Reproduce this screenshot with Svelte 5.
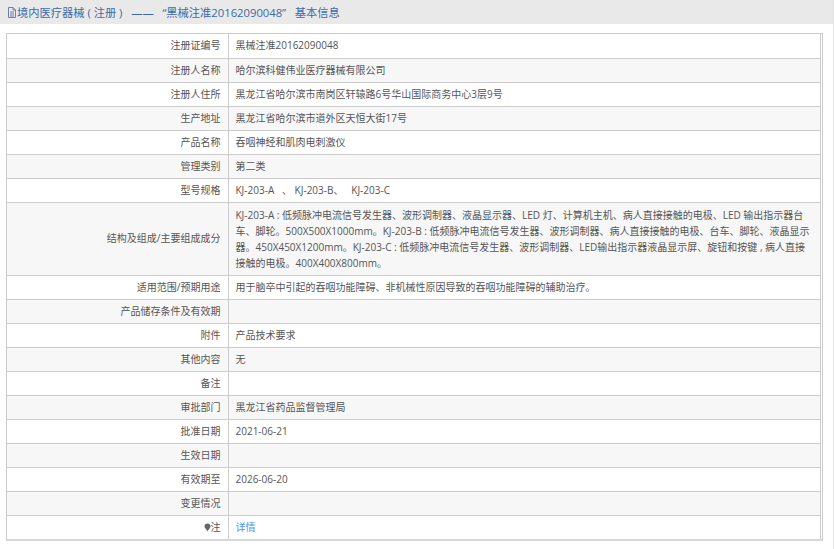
<script>
  const rows = [
    ['注册证编号', '黑械注准20162090048'],
    ['注册人名称', '哈尔滨科健伟业医疗器械有限公司'],
    ['注册人住所', '黑龙江省哈尔滨市南岗区轩辕路6号华山国际商务中心3层9号'],
    ['生产地址', '黑龙江省哈尔滨市道外区天恒大街17号'],
    ['产品名称', '吞咽神经和肌肉电刺激仪'],
    ['管理类别', '第二类'],
    ['型号规格', 'KJ-203-A   、 KJ-203-B、   KJ-203-C'],
    ['结构及组成/主要组成成分', 'KJ-203-A : 低频脉冲电流信号发生器、波形调制器、液晶显示器、LED 灯、计算机主机、病人直接接触的电极、LED 输出指示器台车、脚轮。500X500X1000mm。KJ-203-B : 低频脉冲电流信号发生器、波形调制器、病人直接接触的电极、台车、脚轮、液晶显示器。450X450X1200mm。KJ-203-C : 低频脉冲电流信号发生器、波形调制器、LED输出指示器液晶显示屏、旋钮和按键 , 病人直接接触的电极。400X400X800mm。'],
    ['适用范围/预期用途', '用于脑卒中引起的吞咽功能障碍、非机械性原因导致的吞咽功能障碍的辅助治疗。'],
    ['产品储存条件及有效期', ''],
    ['附件', '产品技术要求'],
    ['其他内容', '无'],
    ['备注', ''],
    ['审批部门', '黑龙江省药品监督管理局'],
    ['批准日期', '2021-06-21'],
    ['生效日期', ''],
    ['有效期至', '2026-06-20'],
    ['变更情况', ''],
  ];
</script>

<div class="page">
  <div class="head">
    <svg class="doc" viewBox="0 0 9 11" width="9" height="11">
      <path d="M1.5 .5H6L8.5 3V10.5H1.5Z M6 .5V3H8.5 M3 5H7 M3 7H7 M3 9H7" fill="none" stroke="#6f7fa8" stroke-width="1" />
    </svg>
    <span>境内医疗器械 ( 注册 )  &nbsp;——  &nbsp;“黑械注准20162090048”   基本信息</span>
  </div>
  <div class="frame">
    <table>
      <tbody>
        {#each rows as r}
          <tr>
            <th>{r[0]}</th>
            <td class:long={r[1].length > 100}>{r[1]}</td>
          </tr>
        {/each}
        <tr>
          <th>
            <svg class="pin" viewBox="0 0 8 10" width="7" height="9">
              <path d="M4 0.5A3.4 3.4 0 0 1 7.4 3.9C7.4 5.8 5 7 4 9.5C3 7 .6 5.8 .6 3.9A3.4 3.4 0 0 1 4 .5Z" fill="#666" />
            </svg>注
          </th>
          <td><span class="link">详情</span></td>
        </tr>
      </tbody>
    </table>
  </div>
</div>

<style>
  :global(body) {
    margin: 0;
    background: #fff;
    font-family: "Open Sans", "Noto Sans CJK SC", sans-serif;
  }

  .page {
    width: 834px;
    height: 549px;
    box-sizing: border-box;
    border-right: 1px solid #e6e6e6;
    overflow: hidden;
  }

  .head {
    display: flex;
    align-items: center;
    gap: 1px;
    height: 24px;
    padding-left: 7px;
    background: #e9e9e9;
    color: #3c6aa8;
    font-size: 11.25px;
    white-space: pre;
  }

  .frame {
    width: 817px;
    margin: 9px 0 0 6px;
    box-sizing: border-box;
    border: 1px solid #ccc;
    border-bottom-width: 2px;
    border-bottom-color: #d6d6dc;
  }

  table {
    width: 814px;
    border-collapse: collapse;
    table-layout: fixed;
    font-size: 10px;
    line-height: 15px;
    color: #555;
  }

  tr:nth-child(even) {
    background: #f7f7f7;
  }

  tr:first-child th,
  tr:first-child td {
    height: 24px;
    border-top: 0;
  }

  th,
  td {
    box-sizing: border-box;
    padding: 4px 7px;
    border-top: 1px solid #ccc;
    font-weight: 400;
    vertical-align: middle;
    white-space: pre-wrap;
  }

  th {
    width: 221px;
    text-align: right;
    border-right: 1px solid #ccc;
    white-space: normal;
  }

  td {
    border-right: 1px solid #ccc;
  }

  td.long {
    line-height: 16px;
  }

  .link {
    color: #4d90fe;
  }

  .pin {
    vertical-align: -1px;
  }
</style>
